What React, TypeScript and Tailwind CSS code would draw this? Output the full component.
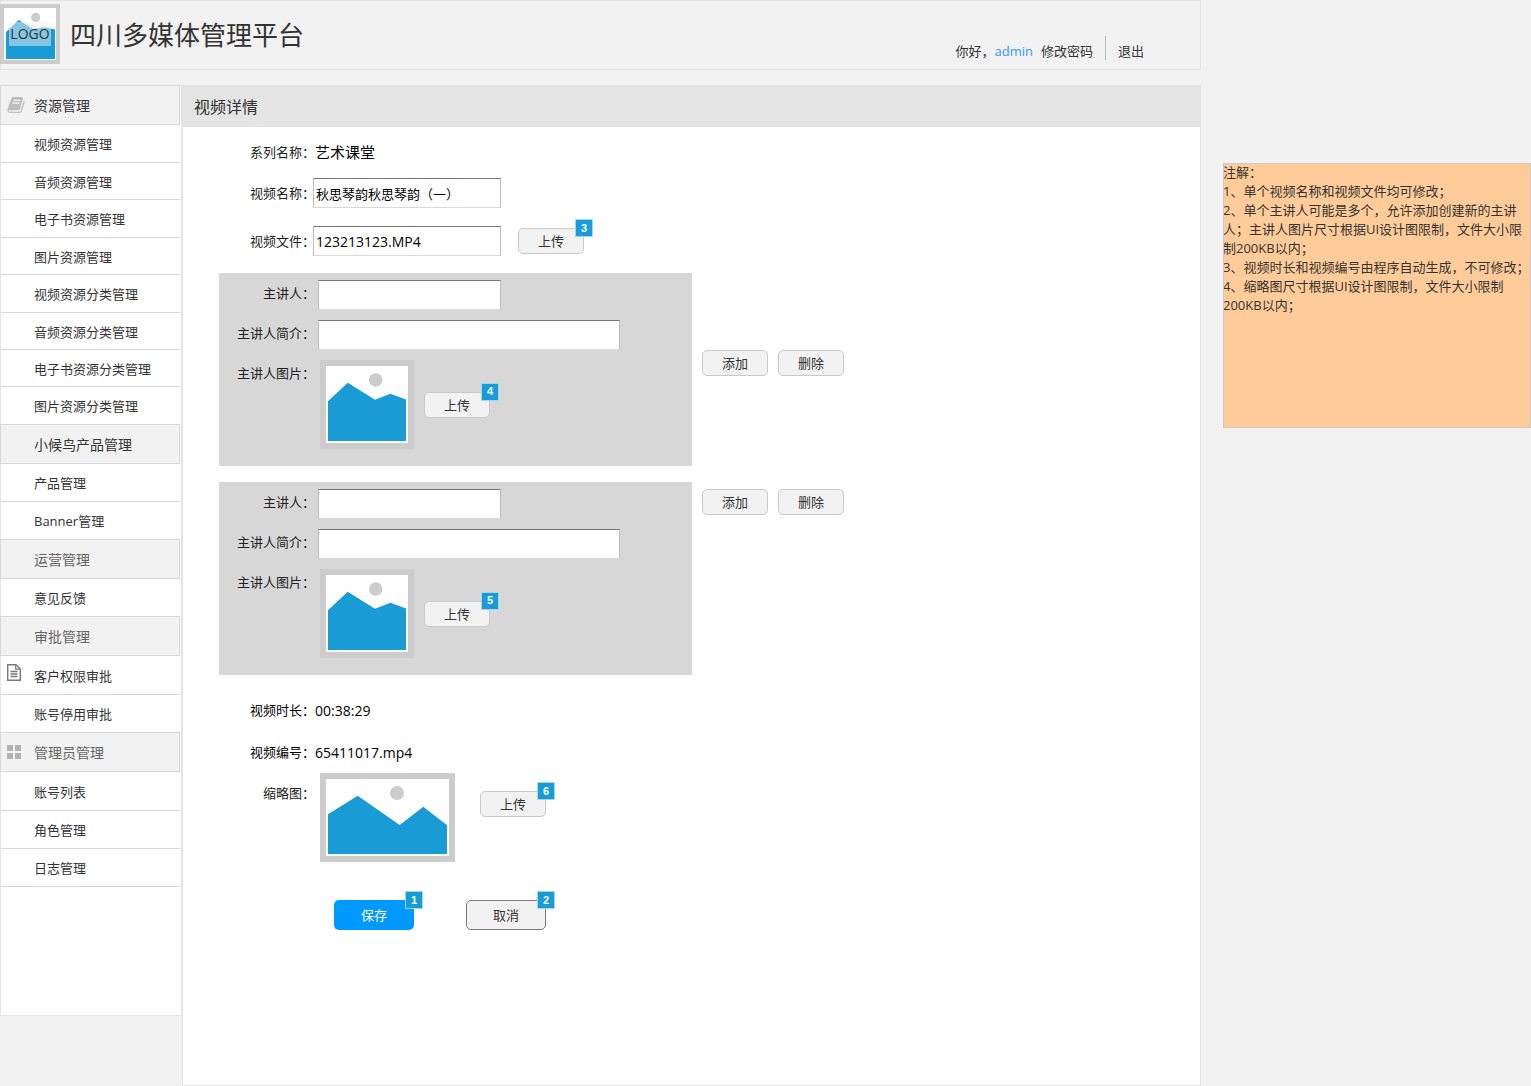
import React from "react";

type MenuItem = { label: string; height: string; icon?: "doc" };
type MenuGroup = { title: string; muted?: boolean; icon?: "book" | "grid"; items: MenuItem[] };

const H37 = "h-[37px]";
const H38 = "h-[38px]";
const H39 = "h-[39px]";

const MENU: MenuGroup[] = [
  {
    title: "资源管理",
    icon: "book",
    items: [
      { label: "视频资源管理", height: H38 },
      { label: "音频资源管理", height: H37 },
      { label: "电子书资源管理", height: H38 },
      { label: "图片资源管理", height: H37 },
      { label: "视频资源分类管理", height: H38 },
      { label: "音频资源分类管理", height: H37 },
      { label: "电子书资源分类管理", height: H37 },
      { label: "图片资源分类管理", height: H37 },
    ],
  },
  {
    title: "小候鸟产品管理",
    items: [
      { label: "产品管理", height: H38 },
      { label: "Banner管理", height: H37 },
    ],
  },
  { title: "运营管理", muted: true, items: [{ label: "意见反馈", height: H37 }] },
  {
    title: "审批管理",
    muted: true,
    items: [
      { label: "客户权限审批", height: H39, icon: "doc" },
      { label: "账号停用审批", height: H37 },
    ],
  },
  {
    title: "管理员管理",
    muted: true,
    icon: "grid",
    items: [
      { label: "账号列表", height: H39 },
      { label: "角色管理", height: H38 },
      { label: "日志管理", height: H38 },
    ],
  },
];

const NOTES = [
  "注解：",
  "1、单个视频名称和视频文件均可修改；",
  "2、单个主讲人可能是多个，允许添加创建新的主讲人；主讲人图片尺寸根据UI设计图限制，文件大小限制200KB以内；",
  "3、视频时长和视频编号由程序自动生成，不可修改；",
  "4、缩略图尺寸根据UI设计图限制，文件大小限制\n200KB以内；",
];

function BookIcon() {
  return (
    <svg width="18" height="16" viewBox="0 128 1664 1536" fill="#bdbdbd" aria-hidden="true">
      <path d="M1639 478q40 57 18 129l-275 906q-19 64-76.5 107.5t-122.5 43.5h-923q-77 0-148.500-53.500t-99.500-131.500q-24-67-2-127 0-4 3-27t4-37q1-8-3-21.500t-3-19.500q2-11 8-21t16.500-23.500 16.500-23.500q23-38 45-91.500t30-91.500q3-10 .5-30t-.5-28q3-11 17-28t17-23q21-36 42-92t25-90q1-9-2.500-32t.5-28q4-13 22-30.500t22-22.500q19-26 42.500-84.500t27.500-96.500q1-8-3-25.500t-2-26.500q2-8 9-18t18-23 17-21q8-12 16.500-30.500t15-35 16-36 19.500-32 26.500-23.500 36-11.500 47.500 5.500l-1 3q38-9 51-9h761q74 0 114 56t18 130l-274 906q-36 119-71.500 153.500t-128.500 34.500h-869q-27 0-38 15-11 16-1 43 24 70 144 70h923q29 0 56-15.500t35-41.500l300-987q7-22 5-57 38 15 59 43zm-1064 2q-4 13 2 22.500t20 9.500h608q13 0 25.500-9.500t16.500-22.500l21-64q4-13-2-22.500t-20-9.500h-608q-13 0-25.500 9.500t-16.500 22.500zm-83 256q-4 13 2 22.500t20 9.500h608q13 0 25.500-9.500t16.500-22.500l21-64q4-13-2-22.500t-20-9.500h-608q-13 0-25.500 9.500t-16.500 22.500z" />
    </svg>
  );
}

function DocIcon() {
  return (
    <svg width="14" height="17" viewBox="0 0 14 17" fill="none" stroke="#7a7a7a" aria-hidden="true">
      <path d="M.7.7H9L13.300 5v11.200H.7z" strokeWidth="1.400" />
      <path d="M8.700.7v4.500h4.500" strokeWidth="1.200" />
      <path d="M3.500 7.500h7M3.500 10h7M3.500 12.500h7" strokeWidth="1.300" />
    </svg>
  );
}

function GridIcon() {
  return (
    <svg width="14" height="14" viewBox="0 0 14 14" fill="#b3b3b3" aria-hidden="true">
      <path d="M0 0h6v6H0zM8 0h6v6H8zM0 8h6v6H0zM8 8h6v6H8z" />
    </svg>
  );
}

function Logo() {
  return (
    <div className="relative h-[60px] w-[60px] shrink-0">
      <svg width="60" height="60" viewBox="0 0 60 60" aria-hidden="true">
        <rect width="60" height="60" fill="#ccc" />
        <rect x="4" y="4" width="52" height="52" fill="#fff" />
        <path d="M6 28L18.700 16L33 25L45 23.300L55 25.500V55H6z" fill="#199bd5" />
        <circle cx="35.700" cy="13.400" r="4.600" fill="#ccc" />
        <rect x="9" y="18" width="42" height="24" fill="#f2f2f2" fillOpacity=".5" />
      </svg>
      <span className="absolute inset-0 flex items-center justify-center pb-[2px] text-[14px] text-[#333]">LOGO</span>
    </div>
  );
}

function SmallPicture() {
  return (
    <svg className="shrink-0" width="94" height="89" viewBox="0 0 94 89" role="img" aria-label="主讲人图片">
      <rect width="94" height="89" fill="#ccc" />
      <rect x="6" y="6" width="82" height="77" fill="#fff" />
      <path d="M8 41.300L27.700 22.700L55 39.700L70.300 33.700L86 39.500V81H8z" fill="#199bd5" />
      <circle cx="55.700" cy="20" r="6.800" fill="#ccc" />
    </svg>
  );
}

function WidePicture() {
  return (
    <svg className="shrink-0" width="135" height="89" viewBox="0 0 135 89" role="img" aria-label="缩略图">
      <rect width="135" height="89" fill="#ccc" />
      <rect x="6" y="6" width="123" height="77" fill="#fff" />
      <path d="M8 41.300L37.700 22.700L79.700 52L103.300 33.700L127 52.300V81H8z" fill="#199bd5" />
      <circle cx="77" cy="20" r="7" fill="#ccc" />
    </svg>
  );
}

function Badge({ n }: { n: number }) {
  return (
    <span className="absolute -top-[9px] -right-[9px] flex h-[18px] w-[18px] items-center justify-center border border-[#a3d7ee] bg-[#199bd5] font-['Liberation_Sans',sans-serif] text-[11px] leading-none font-bold text-white">
      {n}
    </span>
  );
}

function SmallButton({ children, badge }: { children: React.ReactNode; badge?: number }) {
  return (
    <div className="relative shrink-0">
      <button
        type="button"
        className="flex h-[26px] w-[66px] items-center justify-center rounded-[5px] border border-[#c9c9c9] bg-[#f2f2f2] pt-px text-[#333]"
      >
        {children}
      </button>
      {badge !== undefined && <Badge n={badge} />}
    </div>
  );
}

const FIELD =
  "h-[30px] border border-t-[#767676] border-r-[#bdbdbd] border-b-[#d9d9d9] border-l-[#bdbdbd] bg-white px-[2px] text-black outline-none";

function Presenter({ id, badge, actions }: { id: string; badge: number; actions: string }) {
  const label = "flex h-[26px] w-[96px] shrink-0 items-center justify-end whitespace-nowrap";
  return (
    <div className="flex items-start gap-[10px]">
      <div className="flex w-[473px] flex-col gap-[10px] bg-[#d7d7d7] pt-[7px] pb-[17px]">
        <div className="flex gap-[3px]">
          <label htmlFor={id + "-name"} className={label}>主讲人：</label>
          <input id={id + "-name"} type="text" className={FIELD + " w-[183px]"} />
        </div>
        <div className="flex gap-[3px]">
          <label htmlFor={id + "-intro"} className={label}>主讲人简介：</label>
          <input id={id + "-intro"} type="text" className={FIELD + " w-[302px]"} />
        </div>
        <div className="flex gap-[5px]">
          <span className={label}>主讲人图片：</span>
          <div className="flex items-center gap-[10px]">
            <SmallPicture />
            <SmallButton badge={badge}>上传</SmallButton>
          </div>
        </div>
      </div>
      <div className={"flex gap-[10px] " + actions}>
        <SmallButton>添加</SmallButton>
        <SmallButton>删除</SmallButton>
      </div>
    </div>
  );
}

function Sidebar() {
  return (
    <nav className="min-h-[931px] w-[182px] shrink-0 border border-[#e4e4e4] bg-white">
      {MENU.map((group, gi) => (
        <section key={group.title} className={gi === 0 ? "-mt-px" : ""}>
          <h2
            className={
              "-ml-px flex h-[40px] w-[180px] items-center border border-[#d7d7d7] bg-[#f2f2f2] text-[14px] " +
              (group.muted ? "text-[#666]" : "text-[#333]")
            }
          >
            <span className="flex w-[33px] pl-[6px]">
              {group.icon === "book" && <BookIcon />}
              {group.icon === "grid" && <GridIcon />}
            </span>
            {group.title}
          </h2>
          <ul>
            {group.items.map((item, i) => (
              <li
                key={item.label}
                className={
                  "flex w-[179px] " +
                  item.height +
                  (i < group.items.length - 1 || gi === MENU.length - 1 ? " border-b border-[#d7d7d7]" : "")
                }
              >
                <a href="#" className="flex flex-1 items-center pt-[2px] text-[#333]">
                  <span className="flex w-[33px] pb-[8px] pl-[6px]">{item.icon && <DocIcon />}</span>
                  {item.label}
                </a>
              </li>
            ))}
          </ul>
        </section>
      ))}
    </nav>
  );
}

export default function App() {
  return (
    <div className="flex min-h-screen bg-[#f2f2f2] font-['Open_Sans','Noto_Sans_CJK_SC',sans-serif] text-[13px] leading-[19px] text-[#333]">
      <div className="flex min-w-0 flex-1 flex-col">
        <header className="flex h-[70px] items-start border border-[#e4e4e4]">
          <div className="-ml-px pt-[3px]">
            <Logo />
          </div>
          <h1 className="ml-[10px] flex h-[68px] items-center text-[26px] text-[#333]">四川多媒体管理平台</h1>
          <div className="mt-[35px] mr-[56px] ml-auto flex h-[30px] items-center">
            <span>你好，</span>
            <a href="#" className="text-[#3399ff]">admin</a>
            <a href="#" className="ml-2">修改密码</a>
            <span className="mx-3 h-[24px] self-start border-l border-[#bcbcbc]" />
            <a href="#">退出</a>
          </div>
        </header>

        <div className="mt-[15px] flex flex-1 items-start">
          <Sidebar />
          <main className="-ml-px flex min-w-0 flex-1 flex-col self-stretch">
            <h2 className="flex h-[42px] items-center bg-[#e4e4e4] px-[13px] pt-[3px] text-[16px]">视频详情</h2>
            <form className="ml-px flex-1 border border-t-0 border-[#e4e4e4] bg-white text-[#222]">
              <div className="flex h-[51px] items-center pl-[67px]">
                <span>系列名称：</span>
                <span className="text-[15px] text-black">艺术课堂</span>
              </div>
              <div className="flex items-center pl-[67px]">
                <label htmlFor="video-name" className="w-[63px] whitespace-nowrap">视频名称：</label>
                <input id="video-name" type="text" defaultValue="秋思琴韵秋思琴韵（一）" className={FIELD + " w-[188px]"} />
              </div>
              <div className="mt-[18px] flex items-center pl-[67px]">
                <label htmlFor="video-file" className="w-[63px] whitespace-nowrap">视频文件：</label>
                <input id="video-file" type="text" defaultValue="123213123.MP4" className={FIELD + " mr-[17px] w-[188px] text-[14px]"} />
                <SmallButton badge={3}>上传</SmallButton>
              </div>

              <div className="mt-[17px] flex flex-col gap-4 pl-[36px]">
                <Presenter id="presenter-1" badge={4} actions="pt-[77px]" />
                <Presenter id="presenter-2" badge={5} actions="pt-[7px]" />
              </div>

              <div className="mt-[22px] flex h-[26px] items-center pl-[67px] text-black">
                <span>视频时长：</span>
                <span className="text-[14px]">00:38:29</span>
              </div>
              <div className="mt-4 flex h-[26px] items-center pl-[67px] text-black">
                <span>视频编号：</span>
                <span className="text-[14px]">65411017.mp4</span>
              </div>
              <div className="mt-[8px] flex pl-[80px]">
                <span className="mr-[5px] flex h-[40px] items-center">缩略图：</span>
                <WidePicture />
                <div className="ml-[25px] pt-[18px]">
                  <SmallButton badge={6}>上传</SmallButton>
                </div>
              </div>

              <div className="mt-[38px] flex gap-[52px] pl-[151px]">
                <div className="relative">
                  <button type="submit" className="h-[30px] w-[80px] rounded-[5px] bg-[#0099ff] text-white">保存</button>
                  <Badge n={1} />
                </div>
                <div className="relative">
                  <button type="button" className="h-[30px] w-[80px] rounded-[5px] border border-[#797979] bg-[#f2f2f2] text-[#333]">取消</button>
                  <Badge n={2} />
                </div>
              </div>
            </form>
          </main>
        </div>
      </div>

      <aside className="mt-[163px] ml-[22px] min-h-[265px] w-[308px] shrink-0 self-start bg-[#ffcc99] outline -outline-offset-1 outline-[#c9c9c9]">
        {NOTES.map((note) => (
          <p key={note} className="whitespace-pre-line">{note}</p>
        ))}
      </aside>
    </div>
  );
}
